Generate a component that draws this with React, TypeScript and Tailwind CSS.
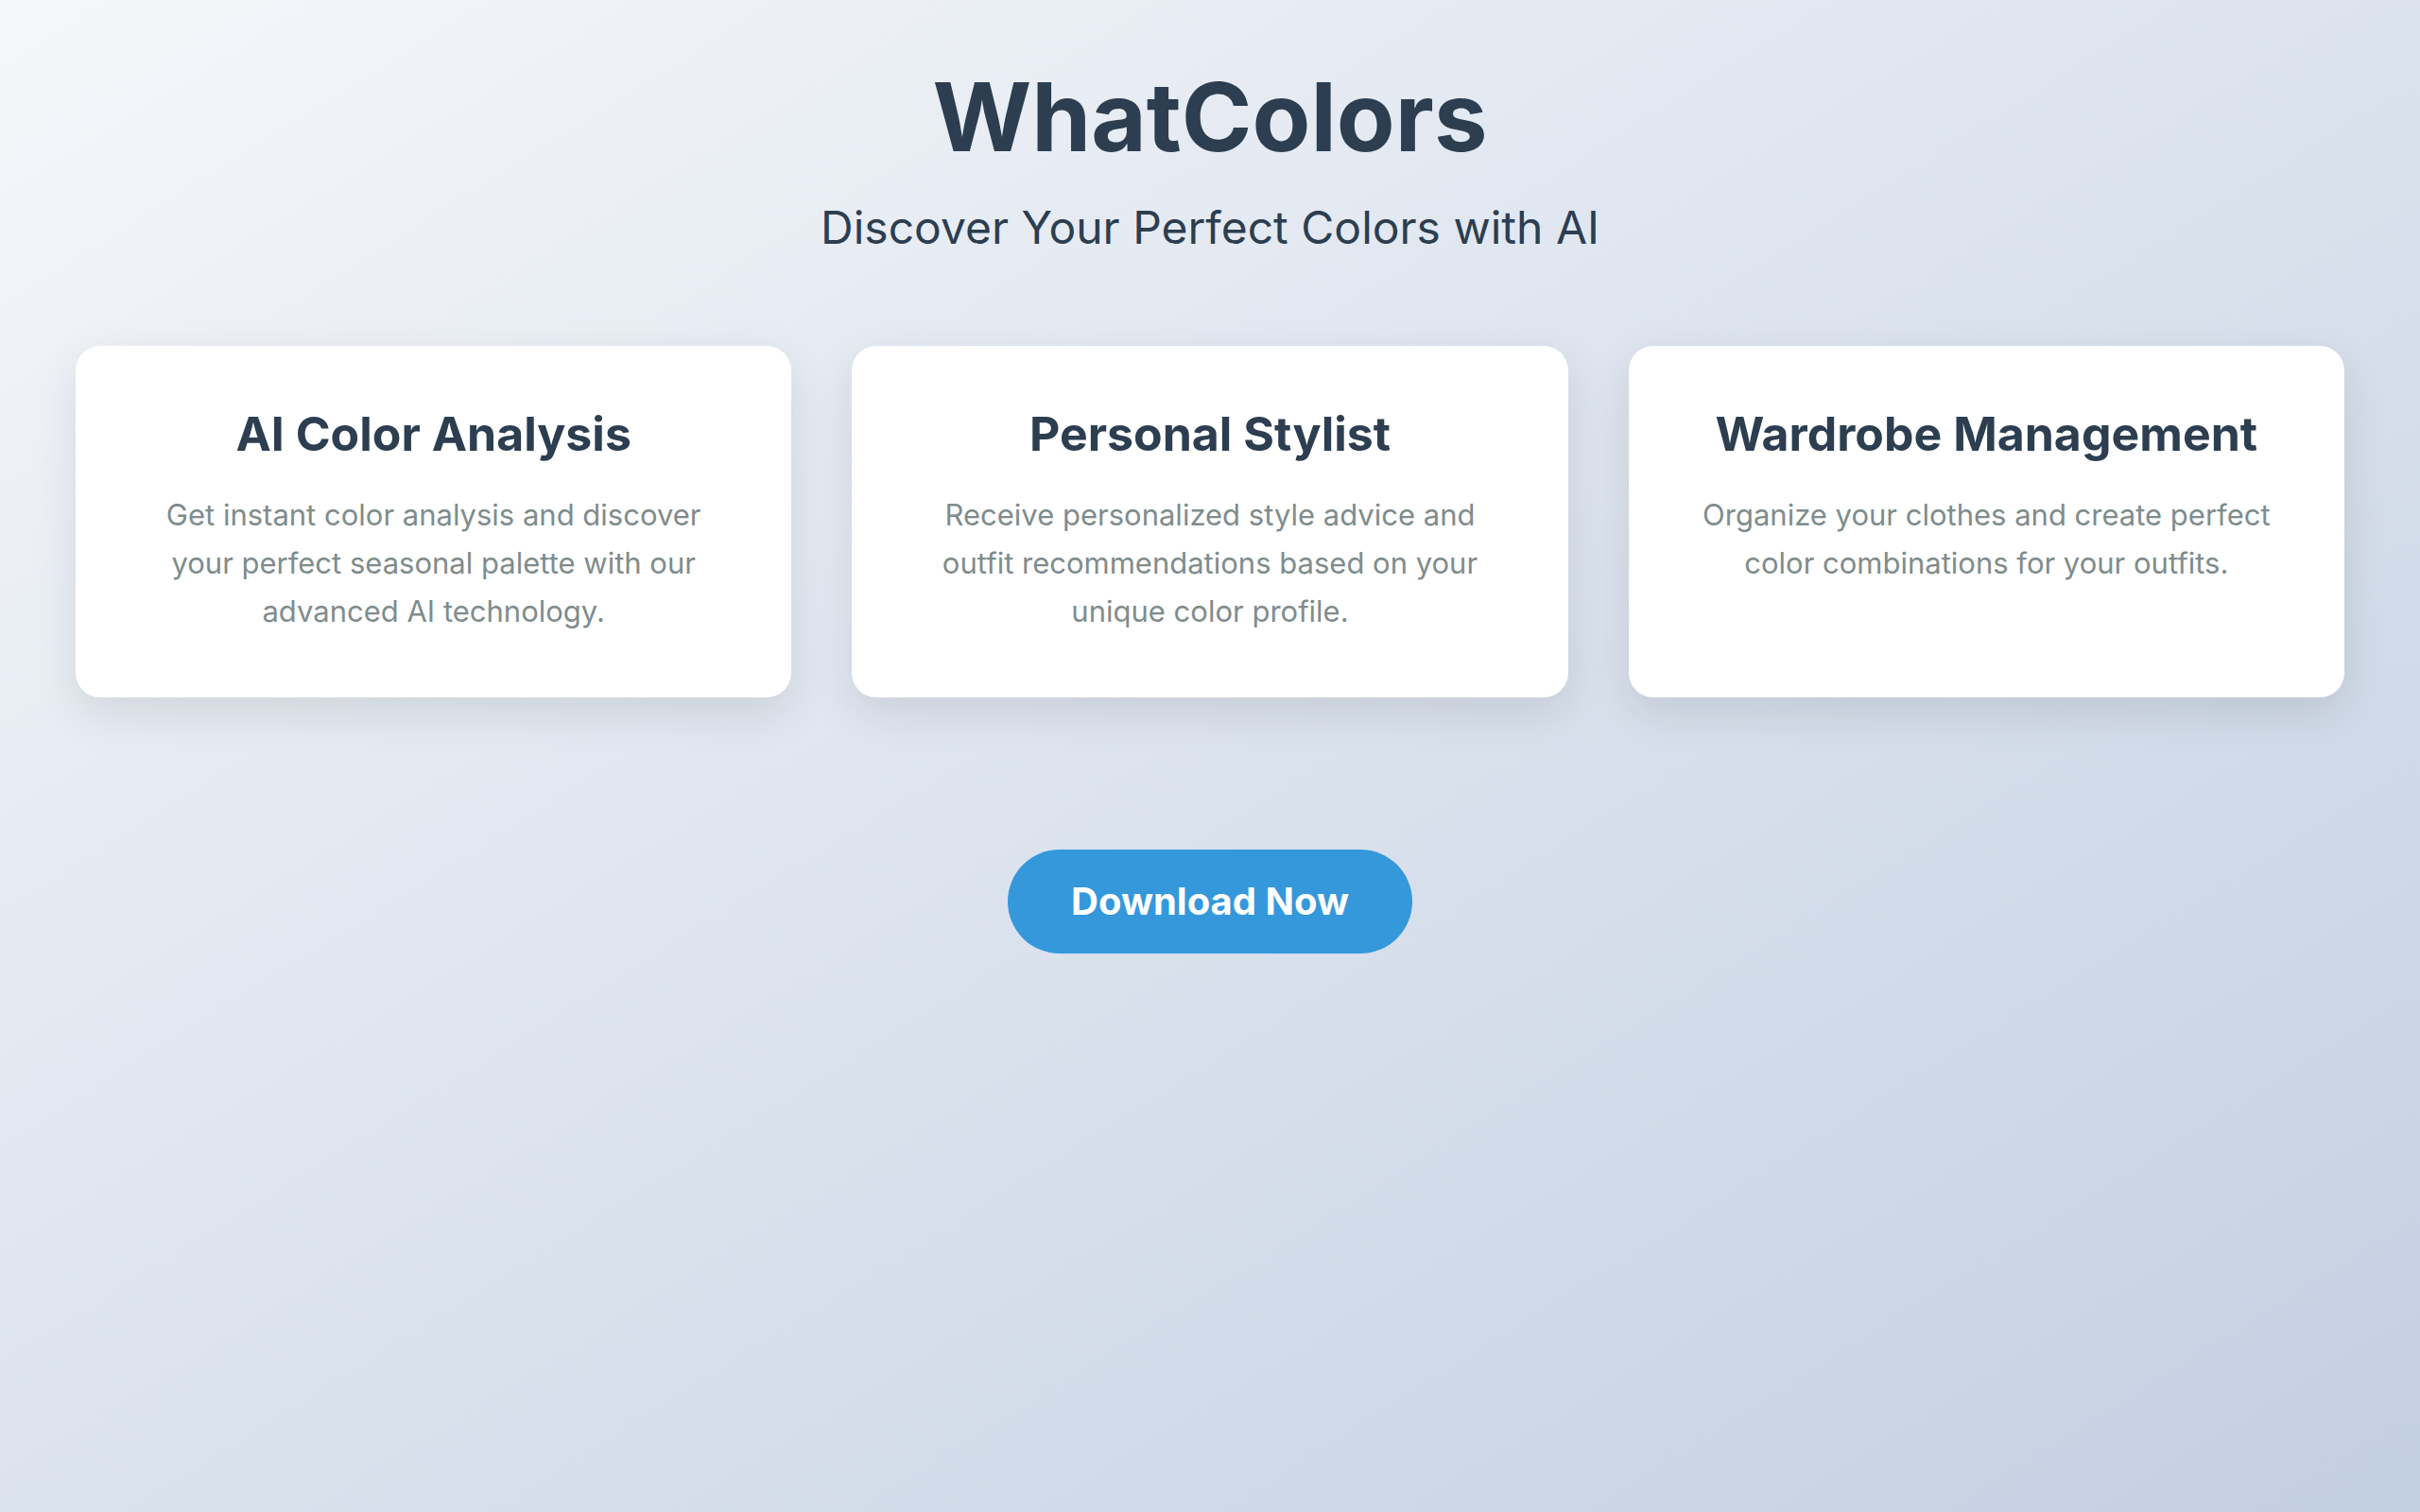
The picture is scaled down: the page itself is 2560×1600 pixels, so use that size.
const features = [
  {
    title: "AI Color Analysis",
    text: "Get instant color analysis and discover your perfect seasonal palette with our advanced AI technology.",
  },
  {
    title: "Personal Stylist",
    text: "Receive personalized style advice and outfit recommendations based on your unique color profile.",
  },
  {
    title: "Wardrobe Management",
    text: "Organize your clothes and create perfect color combinations for your outfits.",
  },
];

export default function App() {
  return (
    <div
      className="min-h-screen w-full bg-gradient-to-br from-[#f5f7fa] to-[#c3cfe2] px-20 pt-[63px] text-center text-[#2c3e50]"
      style={{ fontFamily: "Inter, 'Noto Sans', sans-serif" }}
    >
      {/* Header */}
      <header>
        <h1 className="text-[101px] font-bold leading-[1.2]">WhatColors</h1>
        <p className="mt-[28px] text-[48px] leading-[1.2]">Discover Your Perfect Colors with AI</p>
      </header>

      {/* Features */}
      <section className="mt-[96px] grid grid-cols-3 gap-16">
        {features.map((f) => (
          <div
            key={f.title}
            className="rounded-[26px] bg-white px-16 pt-[63px] pb-[66px] shadow-[0_16px_48px_rgba(0,0,0,0.1)]"
          >
            <h2 className="text-[50px] font-bold leading-[1.2]">{f.title}</h2>
            <p className="mt-[30px] text-[31px] leading-[51px] text-[#7f8c8d]">{f.text}</p>
          </div>
        ))}
      </section>

      {/* Download */}
      <div className="mt-[161px] flex justify-center">
        <button
          type="button"
          className="rounded-full bg-[#3498db] px-[67px] py-[31px] text-[40px] font-bold leading-[1.2] text-white"
        >
          Download Now
        </button>
      </div>
    </div>
  );
}
